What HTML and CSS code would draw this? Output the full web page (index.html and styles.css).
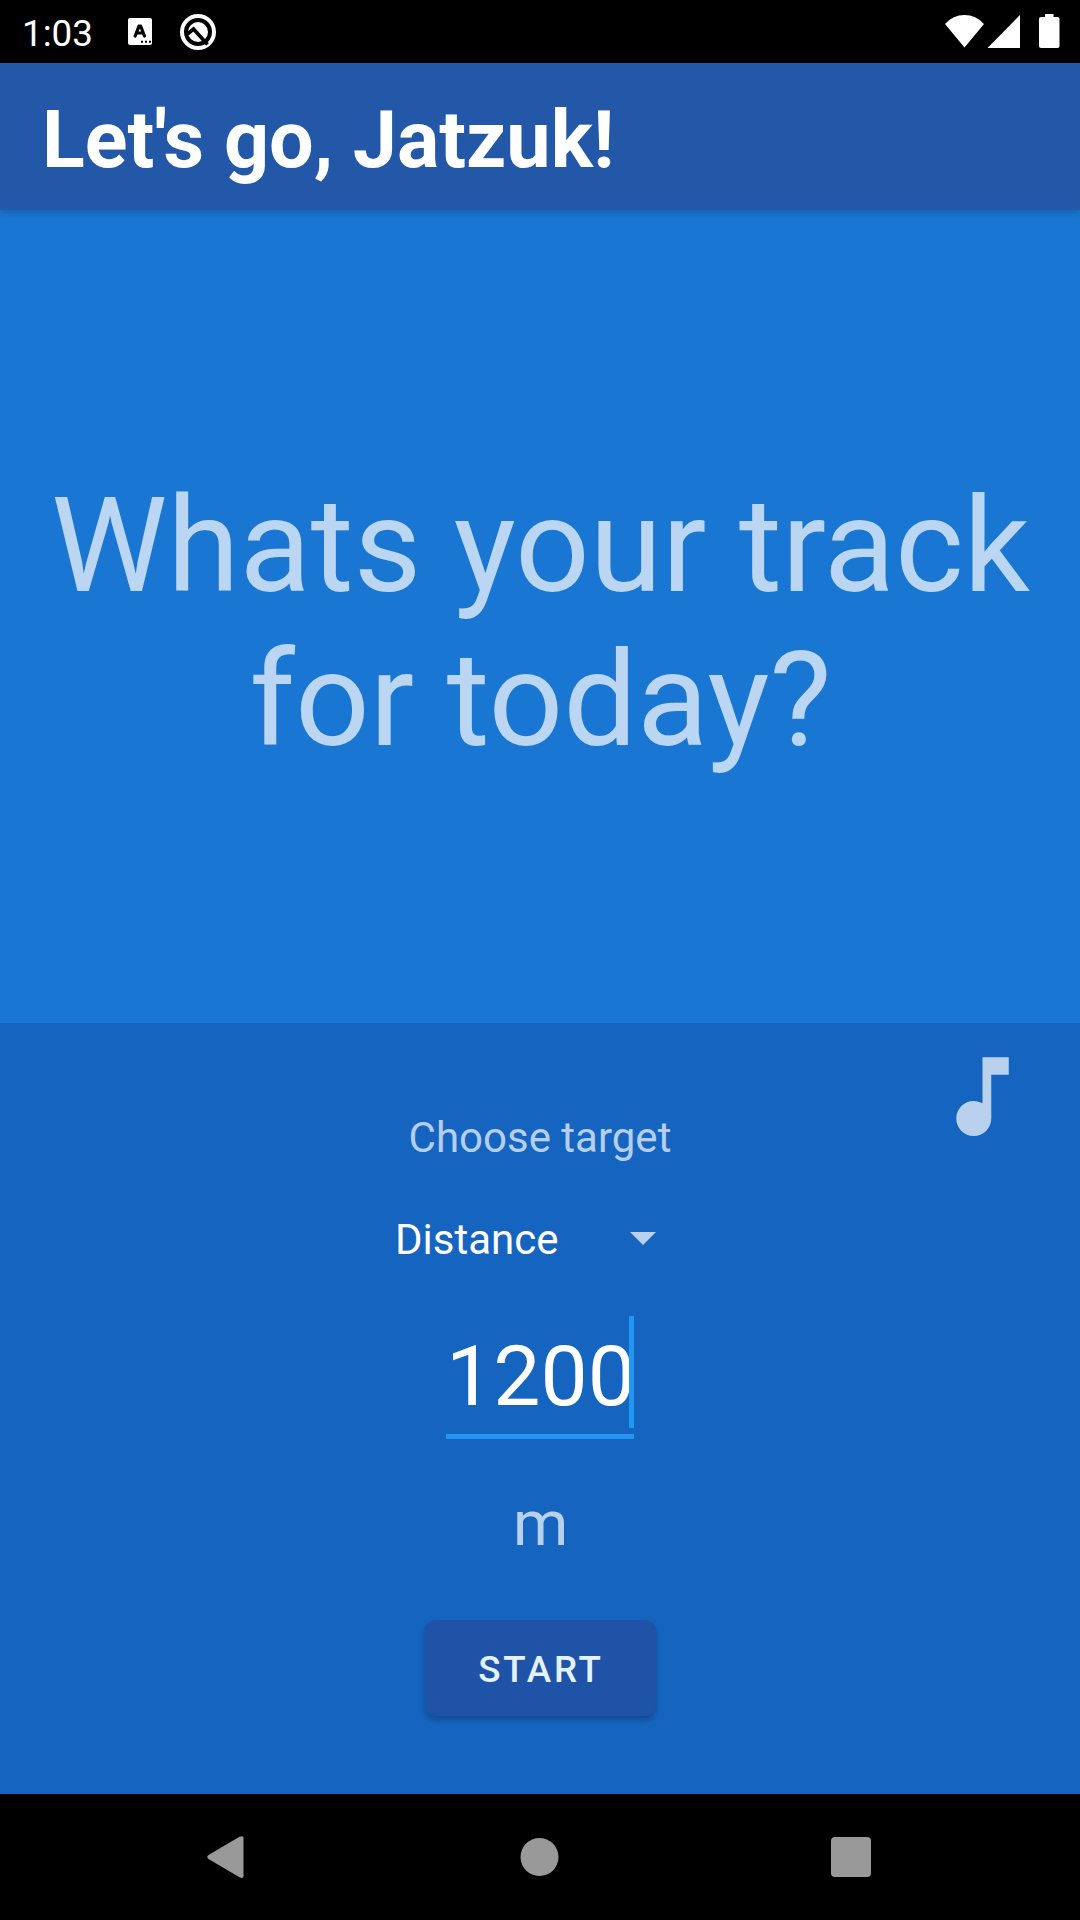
FILE: index.html
```html
<!DOCTYPE html>
<html lang="en">
<head>
<meta charset="utf-8">
<title>Let's go</title>
<link rel="stylesheet" href="styles.css">
</head>
<body>
<div class="screen">
  <div class="status">
    <span class="time">1:03</span>
    <svg class="kbd" width="24" height="27" viewBox="0 0 24 27"><rect width="24" height="27" rx="2" fill="#fff"/><path d="M7.200 18 11 8h1.600L16.500 18M8.800 15h6" fill="none" stroke="#000" stroke-width="3.200" stroke-linecap="round" stroke-linejoin="round"/><path d="M13 22.700h2v2h-2zm4 0h2v2h-2zm4 0h2v2h-2z"/></svg>
    <svg class="q" width="38" height="38" viewBox="0 0 38 38"><circle cx="19" cy="19" r="16" fill="none" stroke="#fff" stroke-width="4"/><circle cx="19" cy="19" r="10" fill="#fff"/><path d="M8.500 21 14.500 16 28.500 31.500" fill="none" stroke="#000" stroke-width="3.600"/></svg>
    <svg class="system" width="116" height="36" viewBox="0 0 116 36"><path d="M0 10Q8 1 19.500 1T39 10L19.500 33.500zM42.500 34 75 1V34zM94 5q0-2 2-2h4V0h8.500v3h4q2 0 2 2v27q0 2-2 2H96q-2 0-2-2z" fill="#fff"/></svg>
  </div>
  <header class="appbar"><h1>Let's go, Jatzuk!</h1></header>
  <section class="hero"><p>Whats your track for today?</p></section>
  <main class="panel">
    <svg class="music" viewBox="0 0 24 24"><path d="M12 3v10.550c-.59-.34-1.270-.55-2-.55-2.210 0-4 1.790-4 4s1.790 4 4 4 4-1.790 4-4V7h4V3h-6z"/></svg>
    <div class="label">Choose target</div>
    <div class="spinner"><span>Distance</span><svg width="26" height="13" viewBox="0 0 26 13"><path d="M0 0h26L13 13z"/></svg></div>
    <div class="field">1200<i class="caret"></i></div>
    <div class="unit">m</div>
    <button class="start">START</button>
  </main>
  <nav class="nav">
    <svg width="40" height="44" viewBox="0 0 40 44"><path d="M2.500 20 33.500 1.800Q37.500 0 37.500 3V41Q37.500 44 33.500 42.200L2.500 24Q0 22 2.500 20z"/></svg>
    <svg width="40" height="40" viewBox="0 0 40 40"><circle cx="20.500" cy="20" r="19"/></svg>
    <svg width="40" height="40" viewBox="0 0 40 40"><rect width="40" height="40" rx="4"/></svg>
  </nav>
</div>
</body>
</html>
```
FILE: styles.css
```css
* { box-sizing: border-box; }
body { margin: 0; font-family: Roboto, sans-serif; color: #fff; }
.screen { width: 1080px; height: 1920px; display: flex; flex-direction: column; overflow: hidden; }
svg { display: block; flex: none; }
.status { height: 63px; background: #000; display: flex; align-items: flex-start; padding-left: 22px; }
.time { font-size: 36.75px; line-height: 44px; margin-top: 12px; width: 106px; }
.kbd { margin-top: 18px; }
.q { margin: 12.5px 0 0 27px; }
.system { margin: 14px 19px 0 auto; }
.appbar { height: 147px; background: #2357a8; display: flex; align-items: center; padding: 7px 42px 0; box-shadow: 0 2px 8px rgba(0, 0, 0, .2); z-index: 1; }
h1 { margin: 0; font-size: 79.1px; line-height: 92px; font-weight: 700; }
.hero { height: 813px; background: #1976d2; display: flex; align-items: center; justify-content: center; padding: 12px 0 0 1px; }
.hero p { margin: 0; width: 1040px; font-size: 131.1px; line-height: 154px; text-align: center; color: rgba(255, 255, 255, .7); }
.panel { position: relative; height: 771px; background: #1565c0; display: flex; flex-direction: column; align-items: center; }
.music { position: absolute; left: 929.75px; top: 21px; width: 105px; height: 105px; fill: rgba(255, 255, 255, .7); }
.label { margin-top: 90px; font-size: 42px; line-height: 50px; color: rgba(255, 255, 255, .7); }
.spinner { margin-top: 52px; width: 290px; padding-right: 29px; display: flex; align-items: center; justify-content: space-between; font-size: 42px; line-height: 50px; }
.spinner svg { fill: rgba(255, 255, 255, .7); margin-bottom: 4px; }
.field { position: relative; margin-top: 50px; width: 188px; height: 124px; font-size: 84px; line-height: 98px; padding-top: 13px; border-bottom: 5px solid #2196f3; }
.caret { position: absolute; right: 0; top: 1px; width: 5px; height: 112px; background: #2196f3; }
.unit { margin-top: 48px; padding-left: 1px; font-size: 63px; line-height: 74px; color: rgba(255, 255, 255, .7); }
.start { margin-top: 59px; width: 231px; height: 96px; border: 0; border-radius: 11px; background: #1f53a7; color: #e3f2fd; font: 500 36.75px/44px Roboto, sans-serif; letter-spacing: 2.8px; box-shadow: 0 4px 6px rgba(0, 0, 0, .25); padding: 3px 0 0 2px; }
.nav { height: 126px; background: #000; display: flex; align-items: center; justify-content: space-between; padding: 0 209px 0 206px; fill: #999; }
```
